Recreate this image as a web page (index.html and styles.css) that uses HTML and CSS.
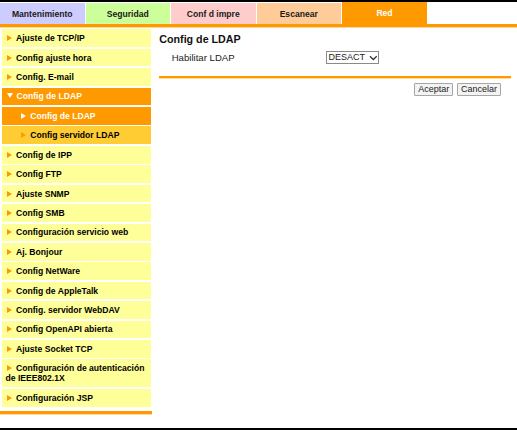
FILE: index.html
```html
<!DOCTYPE html>
<html lang="es">
<head>
<meta charset="utf-8">
<title>Config de LDAP</title>
<link rel="stylesheet" href="styles.css">
</head>
<body>
<div class="frame">
  <div class="tabs">
    <div class="tab tab-mant">Mantenimiento</div>
    <div class="tab tab-seg">Seguridad</div>
    <div class="tab tab-conf">Conf d impre</div>
    <div class="tab tab-scan">Escanear</div>
    <div class="tab tab-red">Red</div>
  </div>
  <div class="rule"></div>
  <div class="body">
    <div class="side">
      <ul class="menu">
        <li class="item"><span class="tri"></span>Ajuste de TCP/IP</li>
        <li class="item"><span class="tri"></span>Config ajuste hora</li>
        <li class="item"><span class="tri"></span>Config. E-mail</li>
        <li class="item open"><span class="tri down"></span>Config de LDAP</li>
        <li class="item sub current"><span class="tri"></span>Config de LDAP</li>
        <li class="item sub"><span class="tri"></span>Config servidor LDAP</li>
        <li class="item"><span class="tri"></span>Config de IPP</li>
        <li class="item"><span class="tri"></span>Config FTP</li>
        <li class="item"><span class="tri"></span>Ajuste SNMP</li>
        <li class="item"><span class="tri"></span>Config SMB</li>
        <li class="item"><span class="tri"></span>Configuración servicio web</li>
        <li class="item"><span class="tri"></span>Aj. Bonjour</li>
        <li class="item"><span class="tri"></span>Config NetWare</li>
        <li class="item"><span class="tri"></span>Config de AppleTalk</li>
        <li class="item"><span class="tri"></span>Config. servidor WebDAV</li>
        <li class="item"><span class="tri"></span>Config OpenAPI abierta</li>
        <li class="item"><span class="tri"></span>Ajuste Socket TCP</li>
        <li class="item"><span class="tri"></span>Configuración de autenticación de IEEE802.1X</li>
        <li class="item"><span class="tri"></span>Configuración JSP</li>
      </ul>
      <div class="rule side-rule"></div>
    </div>
    <div class="main">
      <h1 class="title">Config de LDAP</h1>
      <div class="field">
        <span class="label">Habilitar LDAP</span>
        <span class="select">DESACT<svg class="chev" width="9" height="6" viewBox="0 0 9 6"><path d="M1 1.2 L4.5 4.6 L8 1.2" fill="none" stroke="#333" stroke-width="1.3"/></svg></span>
      </div>
      <div class="rule main-rule"></div>
      <div class="actions">
        <button class="btn btn-ok">Aceptar</button>
        <button class="btn btn-cancel">Cancelar</button>
      </div>
    </div>
  </div>
</div>
</body>
</html>
```
FILE: styles.css
```css
html, body {
  margin: 0;
  padding: 0;
  background: #ffffff;
}
body {
  font-family: "Liberation Sans", Arial, sans-serif;
  color: #111;
}
.frame {
  position: relative;
  width: 517px;
  height: 430px;
  box-sizing: border-box;
  border-top: 2px solid #000;
  border-bottom: 2px solid #000;
  overflow: hidden;
}
.tabs {
  display: flex;
  align-items: flex-end;
  gap: 1px;
  height: 22px;
}
.tab {
  width: 84.5px;
  height: 21px;
  display: flex;
  align-items: center;
  justify-content: center;
  font-size: 8.6px;
  font-weight: bold;
  color: #1a1a1a;
}
.tab-mant { background: #ccccff; }
.tab-seg { background: #ccff99; }
.tab-conf { background: #ffcccc; }
.tab-scan { background: #ffcc99; }
.tab-red {
  background: #ff9900;
  color: #fff;
  height: 22px;
  width: 85px;
}
.rule {
  height: 3px;
  background: #ff9900;
  border-bottom: 1px solid #ffd9a3;
}
.body {
  display: flex;
  padding-top: 1.3px;
}
.side {
  width: 152px;
  flex: none;
}
.menu {
  list-style: none;
  margin: 0 0 0 1.5px;
  padding: 0;
  width: 149.5px;
  display: flex;
  flex-direction: column;
  gap: 1.74px;
}
.item {
  background: #ffff99;
  font-size: 8.6px;
  font-weight: bold;
  line-height: 10px;
  padding: 3.85px 4px 3.85px 4px;
  color: #000;
}
.tri {
  display: inline-block;
  width: 0;
  height: 0;
  border-left: 5px solid #ff9900;
  border-top: 3px solid transparent;
  border-bottom: 3px solid transparent;
  margin: 0 4.5px 0 1px;
  vertical-align: 0px;
}
.tri.down {
  border-left: 3.2px solid transparent;
  border-right: 3.2px solid transparent;
  border-top: 5px solid #fff;
  border-bottom: 0;
  margin: 0 3.4px 0 1.6px;
  vertical-align: 1px;
}
.item.open {
  background: #ff9900;
  color: #fff;
}
.item.sub {
  padding-left: 18.2px;
  background: #ffcc33;
}
.item.sub.current {
  background: #ff9900;
  color: #fff;
}
.item.sub.current .tri {
  border-left-color: #fff;
}
.side-rule {
  margin-top: 4.8px;
  height: 2.5px;
}
.main {
  margin-left: 7.3px;
  width: 351.7px;
  padding-top: 3.8px;
}
.title {
  margin: 0;
  font-size: 10.7px;
  line-height: 13px;
  font-weight: bold;
  color: #111;
}
.field {
  display: flex;
  align-items: center;
  margin-top: 4.6px;
  padding-left: 12.4px;
  height: 13.3px;
}
.label {
  width: 154.3px;
  font-size: 9.6px;
  color: #222;
}
.select {
  box-sizing: border-box;
  width: 52.7px;
  height: 13.3px;
  border: 1px solid #8a8a8a;
  background: #fff;
  font-size: 9px;
  line-height: 11px;
  padding-left: 1.5px;
  display: flex;
  align-items: center;
  color: #222;
}
.chev {
  margin-left: 4px;
  margin-top: 1px;
}
.main-rule {
  margin-top: 12px;
  height: 2.5px;
}
.actions {
  display: flex;
  justify-content: flex-end;
  gap: 4px;
  margin-top: 3.4px;
  padding-right: 10.3px;
}
.btn {
  box-sizing: border-box;
  height: 13px;
  padding: 0;
  font-family: "Liberation Sans", Arial, sans-serif;
  font-size: 9px;
  line-height: 11px;
  color: #222;
  background: #f3f3f3;
  border: 1px solid #a6a6a6;
  border-radius: 1px;
}
.btn-ok { width: 39px; }
.btn-cancel { width: 43.4px; }
```
